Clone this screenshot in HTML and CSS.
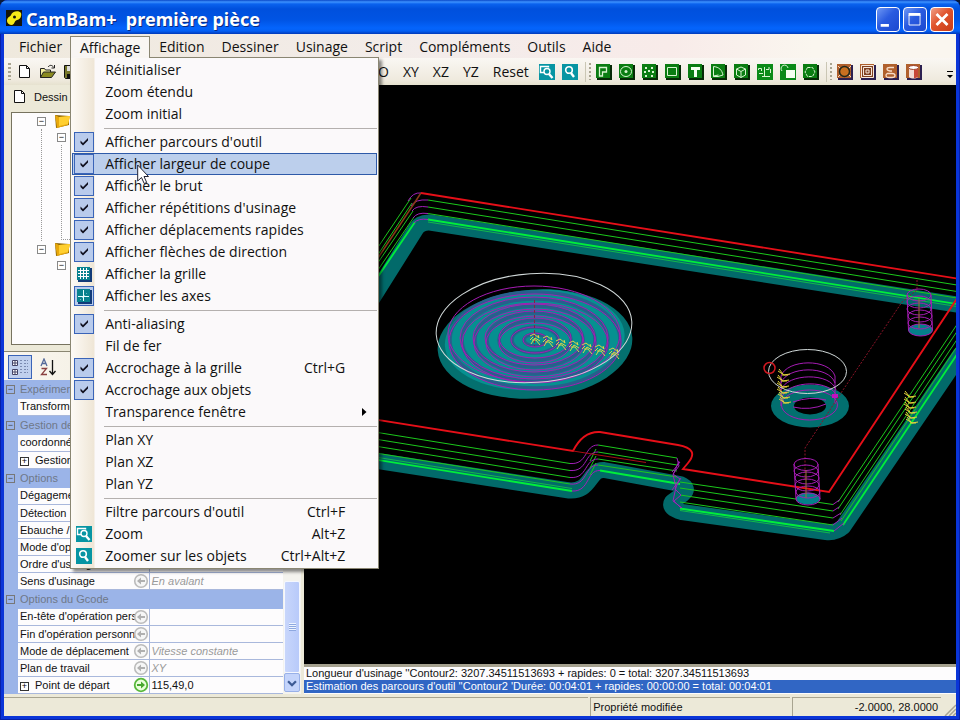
FILE: index.html
```html
<!DOCTYPE html>
<html lang="fr">
<head>
<meta charset="utf-8">
<title>CamBam+ première pièce</title>
<link rel="stylesheet" href="styles.css">
</head>
<body>
<svg class="defs" aria-hidden="true">
  <defs>
    <symbol id="check" viewBox="0 0 16 16"><path d="M4.500 6.500v2.500L7 11.500l5-5V4L7 9z" fill="#101020"/></symbol>
    <symbol id="page" viewBox="0 0 16 16"><path d="M2.500 1.500h7l3 3v9h-10z" fill="#fff" stroke="#111"/><path d="M9.500 1.500v3h3" fill="none" stroke="#111"/></symbol>
    <symbol id="zoomwin" viewBox="0 0 16 16"><path fill="#0795a3" d="M0 0h16v16H0z"/><path d="M5 8.500H1.500v-6h8v1" fill="none" stroke="#fff" stroke-width="1.400"/><circle cx="8" cy="7.500" r="3" fill="none" stroke="#fff" stroke-width="1.400"/><path d="M10 10l3.500 4" stroke="#fff" stroke-width="2.400"/></symbol>
    <symbol id="zoomobj" viewBox="0 0 16 16"><path fill="#0795a3" d="M0 0h16v16H0z"/><circle cx="7" cy="6" r="3.300" fill="none" stroke="#fff" stroke-width="1.600"/><path d="M9 9l3 4" stroke="#fff" stroke-width="2.400"/></symbol>
    <symbol id="tile" viewBox="0 0 16 16"><path fill="#062a06" d="M1 1h15v15H1z"/><path fill="#0a7d12" d="M0 0h14v14H0z"/></symbol>
    <symbol id="btile" viewBox="0 0 16 16"><path fill="#2c2050" d="M1 1h15v15H1z"/><path fill="#b0602c" d="M0 0h14v14H0z"/></symbol>
    <symbol id="back" viewBox="0 0 16 16"><circle cx="8" cy="8" r="6.300" fill="#f6f6f6" stroke="#bbb" stroke-width="1.600"/><path d="M4 8l4-3.500v2.500h4v2H8v2.500z" fill="#b0b0b0"/></symbol>
    <symbol id="fwd" viewBox="0 0 16 16"><circle cx="8" cy="8" r="6.300" fill="#eaffdc" stroke="#58b83c" stroke-width="1.800"/><path d="M12 8L8 4.500v2.500H4v2h4v2.500z" fill="#48a830"/></symbol>
    <symbol id="folder" viewBox="0 0 17 15"><path d="M1 1l14 1v9L2 14z" fill="#8a6408"/><path d="M1 1l4 2 11-1-2 9-11 3z" fill="#e8a80c"/><path d="M5 3l11-1-2 8-9 2z" fill="#ffcf30"/></symbol>
    <g id="up" fill="none" stroke="#d8d44a"><path d="M-5-3l4-2 5 4-1-3M-4 5l4-6 5 3M-3 1l4 0 4 5M-5 1l3-3"/></g>
    <g id="dn" fill="none" stroke="#e4d43a"><path d="M-6-3l6 4 6-1M-5-5l4 5M-2 1h6"/></g>
    <ellipse id="ring" rx="12" ry="6"/>
  </defs>
</svg>

<div class="window">
  <header class="titlebar">
    <svg class="logo" viewBox="0 0 16 16" aria-hidden="true"><path fill="#14140a" d="M0 0h16v16H0z"/><path d="M1 11c0-4 3-4 4-6 1-4 8-5 10-2 1 3-1 7-4 7-3 1-2 4-5 5-3 0-5-2-5-4z" fill="#f5ea18"/><circle cx="8.500" cy="7" r="1.500" fill="#14140a"/></svg>
    <h1>CamBam+ &nbsp;première pièce</h1>
    <div class="winbtns">
      <button class="wb" aria-label="Réduire"><svg viewBox="0 0 24 24"><path fill="#fff" d="M4 17h9v3H4z"/></svg></button>
      <button class="wb" aria-label="Agrandir"><svg viewBox="0 0 24 24"><path d="M5.500 7v11h12V7z" fill="none" stroke="#fff"/><path fill="#fff" d="M5 5h13v3H5z"/></svg></button>
      <button class="wb close" aria-label="Fermer"><svg viewBox="0 0 24 24"><path d="M6 6l12 12M18 6L6 18" stroke="#fff" stroke-width="3"/></svg></button>
    </div>
  </header>

  <nav class="menubar">
    <button>Fichier</button>
    <div class="open">
      <button aria-expanded="true">Affichage</button>
      <div class="popup" role="menu">
        <button role="menuitem"><i></i><span>Réinitialiser</span></button>
        <button role="menuitem"><i></i><span>Zoom étendu</span></button>
        <button role="menuitem"><i></i><span>Zoom initial</span></button>
        <hr>
        <button role="menuitemcheckbox" aria-checked="true"><i class="on"><svg><use href="#check"/></svg></i><span>Afficher parcours d'outil</span></button>
        <button class="hot" role="menuitemcheckbox" aria-checked="true"><i class="on"><svg><use href="#check"/></svg></i><span>Afficher largeur de coupe</span></button>
        <button role="menuitemcheckbox" aria-checked="true"><i class="on"><svg><use href="#check"/></svg></i><span>Afficher le brut</span></button>
        <button role="menuitemcheckbox" aria-checked="true"><i class="on"><svg><use href="#check"/></svg></i><span>Afficher répétitions d'usinage</span></button>
        <button role="menuitemcheckbox" aria-checked="true"><i class="on"><svg><use href="#check"/></svg></i><span>Afficher déplacements rapides</span></button>
        <button role="menuitemcheckbox" aria-checked="true"><i class="on"><svg><use href="#check"/></svg></i><span>Afficher flèches de direction</span></button>
        <button role="menuitemcheckbox" aria-checked="false"><i><svg viewBox="0 0 16 16"><path fill="#123a78" d="M2 2h14v14H2z"/><path fill="#08828e" d="M1 1h13v13H1z"/><path d="M4.500 2v11M7.500 2v11M10.500 2v11M2 4.500h11M2 7.500h11M2 10.500h11" stroke="#fff"/></svg></i><span>Afficher la grille</span></button>
        <button role="menuitemcheckbox" aria-checked="true"><i class="on"><svg viewBox="0 0 16 16"><path fill="#123a78" d="M2 2h14v14H2z"/><path fill="#08828e" d="M1 1h13v13H1z"/><path d="M7.500 2v11M2 8.500h11" stroke="#e8ffff"/><path d="M4 12l7-7" stroke="#9cd4dc" stroke-dasharray="1 2"/></svg></i><span>Afficher les axes</span></button>
        <hr>
        <button role="menuitemcheckbox" aria-checked="true"><i class="on"><svg><use href="#check"/></svg></i><span>Anti-aliasing</span></button>
        <button role="menuitemcheckbox" aria-checked="false"><i></i><span>Fil de fer</span></button>
        <button role="menuitemcheckbox" aria-checked="true"><i class="on"><svg><use href="#check"/></svg></i><span>Accrochage à la grille</span><kbd>Ctrl+G</kbd></button>
        <button role="menuitemcheckbox" aria-checked="true"><i class="on"><svg><use href="#check"/></svg></i><span>Accrochage aux objets</span></button>
        <button role="menuitem"><i></i><span>Transparence fenêtre</span><svg class="sub" viewBox="0 0 5 8"><path d="M0 0l4.500 4L0 8z"/></svg></button>
        <hr>
        <button role="menuitem"><i></i><span>Plan XY</span></button>
        <button role="menuitem"><i></i><span>Plan XZ</span></button>
        <button role="menuitem"><i></i><span>Plan YZ</span></button>
        <hr>
        <button role="menuitem"><i></i><span>Filtre parcours d'outil</span><kbd>Ctrl+F</kbd></button>
        <button role="menuitem"><i><svg><use href="#zoomwin"/></svg></i><span>Zoom</span><kbd>Alt+Z</kbd></button>
        <button role="menuitem"><i><svg><use href="#zoomobj"/></svg></i><span>Zoomer sur les objets</span><kbd>Ctrl+Alt+Z</kbd></button>
        <svg class="cursor" viewBox="0 0 12 21" aria-hidden="true"><path d="M.7 1v16l3.800-3.500 2.700 6 2.500-1-2.700-6h4.500z" fill="#fff" stroke="#223"/></svg>
      </div>
    </div>
    <button>Edition</button>
    <button>Dessiner</button>
    <button>Usinage</button>
    <button>Script</button>
    <button>Compléments</button>
    <button>Outils</button>
    <button>Aide</button>
  </nav>

  <div class="toolbar" role="toolbar">
    <div class="files">
      <span class="grip"></span>
      <button aria-label="Nouveau"><svg><use href="#page"/></svg></button>
      <button aria-label="Ouvrir"><svg viewBox="0 0 16 16"><path d="M.5 13.500v-9h4l1 1.500h5v2" fill="#f4f0a0" stroke="#222"/><path d="M.5 13.500l3-5.500h12l-4 5.500z" fill="#8a8a20" stroke="#222"/><path d="M8 3c2-2.500 4-2 6 .5M14.500 1v3h-3" fill="none" stroke="#222"/></svg></button>
      <button aria-label="Enregistrer"><svg viewBox="0 0 16 16"><path d="M1.500 1.500h13v13h-12l-1-1z" fill="#77772a" stroke="#111"/><path d="M4 2h8v5H4z" fill="#ddd"/><path d="M4 10h8v4H4z" fill="#111"/></svg></button>
    </div>
    <div class="views">
      <button>O</button><button>XY</button><button>XZ</button><button>YZ</button><button>Reset</button>
    </div>
    <div class="icons">
      <button aria-label="Zoom"><svg><use href="#zoomwin"/></svg></button>
      <button aria-label="Zoomer sur les objets"><svg><use href="#zoomobj"/></svg></button>
    </div>
    <span class="vsep"></span><span class="grip"></span>
    <div class="icons">
      <button aria-label="Polyligne"><svg viewBox="0 0 16 16"><use href="#tile"/><path d="M3.500 12V3.500h7V8h-4v4z" fill="none" stroke="#d8f4d0" stroke-width="1.300"/></svg></button>
      <button aria-label="Cercle"><svg viewBox="0 0 16 16"><use href="#tile"/><ellipse cx="7" cy="7.500" rx="5.500" ry="5" fill="none" stroke="#d8f4d0"/><circle cx="7" cy="7.500" r="1.500" fill="#d8f4d0"/></svg></button>
      <button aria-label="Points"><svg viewBox="0 0 16 16"><use href="#tile"/><path d="M3 3h2v2H3zM9 3h2v2H9zM2 7h2v2H2zM6 6h2v2H6zM10 7h2v2h-2zM3 11h2v2H3zM9 11h2v2H9z" fill="#d8f4d0"/></svg></button>
      <button aria-label="Rectangle"><svg viewBox="0 0 16 16"><use href="#tile"/><path d="M2.500 3.500h9v8h-9z" fill="none" stroke="#d8f4d0"/></svg></button>
      <button aria-label="Texte"><svg viewBox="0 0 16 16"><use href="#tile"/><path d="M3 3h9v3H9v7H6V6H3z" fill="#f4fff0"/></svg></button>
      <button aria-label="Arc"><svg viewBox="0 0 16 16"><use href="#tile"/><path d="M2.500 12.500V2.500C8 3 11 6 12 11l-5 1.500zM2.500 12l5-1" fill="none" stroke="#d8f4d0"/></svg></button>
      <button aria-label="Surface"><svg viewBox="0 0 16 16"><use href="#tile"/><path d="M2.500 5l4.500-2 4.500 2v6L7 13.500 2.500 11zM2.500 5L7 7.500 11.500 5M7 7.500v6" fill="none" stroke="#d8f4d0"/></svg></button>
      <button aria-label="Aligner"><svg viewBox="0 0 16 16"><path fill="#0a8a18" d="M0 0h16v16H0z"/><path d="M1.500 6V4.500h3V7M7.500 3v9M5 12.500h8M9 5.500h3V3M13.500 5v4M2 9.500h4" fill="none" stroke="#d8f4d0"/></svg></button>
      <button aria-label="Transformer"><svg viewBox="0 0 16 16"><path fill="#0a8a18" d="M0 0h16v16H0z"/><path d="M2 7a3.500 3.500 0 1 1 6-3" fill="none" stroke="#d8f4d0"/><path fill="#f4fff0" d="M6 6h9v8H6z"/></svg></button>
      <button aria-label="Contour"><svg viewBox="0 0 16 16"><use href="#tile"/><path d="M4.500 3.500h5L12 8l-2.500 4.500h-5L2 8z" fill="none" stroke="#d8f4d0" stroke-dasharray="3 1"/></svg></button>
    </div>
    <span class="vsep"></span><span class="grip"></span>
    <div class="icons">
      <button aria-label="Profil"><svg viewBox="0 0 16 16"><use href="#btile"/><circle cx="7.500" cy="7.500" r="5" fill="#c87020" stroke="#20281c" stroke-width="1.500"/><path d="M1 2l2 2M14 2l-2 2M1 13l2-2M14 13l-2-2" stroke="#f4d8c0"/></svg></button>
      <button aria-label="Poche"><svg viewBox="0 0 16 16"><use href="#btile"/><path d="M1.500 1.500h12v12h-12zM3.500 3.500h8v8h-8zM6 6h3v3H6z" fill="#804020" stroke="#f8e8dc"/></svg></button>
      <button aria-label="Gravure"><svg viewBox="0 0 16 16"><use href="#btile"/><path d="M11 3.500H7c-4 0-4 3 0 3.500h2M4 9.500h5c4 0 4 4 0 4H6c-3 0-4-2-2-4" fill="none" stroke="#f8dcc8" stroke-width="1.300"/></svg></button>
      <button aria-label="Perçage"><svg viewBox="0 0 16 16"><use href="#btile"/><path d="M3 4v9c2 2 7 2 9 0V4z" fill="#f4dcd4"/><path d="M8 4h4v9l-4 1.500z" fill="#c84838"/><ellipse cx="7.500" cy="3.500" rx="5" ry="2" fill="#fff" stroke="#a04028"/></svg></button>
    </div>
    <button class="more" aria-label="Plus"><svg viewBox="0 0 6 8"><path d="M0 0h6v1H0zM0 4h6L3 7z"/></svg></button>
  </div>

  <main class="body">
    <section class="side">
      <div class="tab"><svg><use href="#page"/></svg><span>Dessin</span></div>
      <ul class="tree">
        <li><div class="node"><button aria-label="Réduire Calques">−</button><svg><use href="#folder"/></svg></div>
          <ul class="long"><li><div class="node"><button aria-label="Réduire Défaut">−</button></div><ul class="leaf"></ul></li></ul></li>
        <li><div class="node"><button aria-label="Réduire Usinage">−</button><svg><use href="#folder"/></svg></div>
          <ul><li><div class="node"><button aria-label="Réduire Pièce">−</button></div></li></ul></li>
      </ul>
      <div class="proptools">
        <button class="pressed" aria-label="Par catégorie"><svg viewBox="0 0 18 18"><path d="M1.500 2.500h5v5h-5zM1.500 11.500h5v5h-5z" fill="#fff" stroke="#446"/><path d="M4 3v4M2 5h4M4 12v4M2 14h4" stroke="#446"/><path d="M9 2.500h3M13 2.500h4M9 5.500h3M13 5.500h4M9 8.500h3M13 8.500h4M9 11.500h3M13 11.500h4M9 14.500h3M13 14.500h4" stroke="#7a8ab0" stroke-dasharray="2 1"/></svg></button>
        <button aria-label="Alphabétique"><svg viewBox="0 0 18 18"><path d="M2 8l3-7 3 7M3 5.500h4" fill="none" stroke="#556a9a" stroke-width="1.300"/><path d="M2.500 10.500h5l-5 6h5.500" fill="none" stroke="#8a4040" stroke-width="1.300"/><path d="M13.500 2v14M10.500 13l3 3.500 3-3.500" fill="none" stroke="#111" stroke-width="1.300"/></svg></button>
      </div>
      <div class="propwrap">
        <table class="props">
          <colgroup><col class="c0"><col class="c1"><col></colgroup>
          <tbody>
          <tr class="cat"><td><button aria-label="Réduire">−</button></td><th colspan="2">Expérimental</th></tr>
          <tr><td></td><th>Transformer</th><td></td></tr>
          <tr class="cat"><td><button aria-label="Réduire">−</button></td><th colspan="2">Gestion des points</th></tr>
          <tr><td></td><th>coordonnées</th><td></td></tr>
          <tr><td></td><th><button aria-label="Développer">+</button>Gestion</th><td></td></tr>
          <tr class="cat"><td><button aria-label="Réduire">−</button></td><th colspan="2">Options</th></tr>
          <tr><td></td><th>Dégagement</th><td></td></tr>
          <tr><td></td><th>Détection</th><td></td></tr>
          <tr><td></td><th>Ebauche / Finition</th><td></td></tr>
          <tr><td></td><th>Mode d'optimisation</th><td></td></tr>
          <tr><td></td><th>Ordre d'usinage</th><td></td></tr>
          <tr><td></td><th>Sens d'usinage<svg><use href="#back"/></svg></th><td class="dim">En avalant</td></tr>
          <tr class="cat"><td><button aria-label="Réduire">−</button></td><th colspan="2">Options du Gcode</th></tr>
          <tr><td></td><th>En-tête d'opération pers<svg><use href="#back"/></svg></th><td></td></tr>
          <tr><td></td><th>Fin d'opération personn<svg><use href="#back"/></svg></th><td></td></tr>
          <tr><td></td><th>Mode de déplacement<svg><use href="#back"/></svg></th><td class="dim">Vitesse constante</td></tr>
          <tr><td></td><th>Plan de travail<svg><use href="#back"/></svg></th><td class="dim">XY</td></tr>
          <tr><td></td><th><button aria-label="Développer">+</button>Point de départ<svg><use href="#fwd"/></svg></th><td>115,49,0</td></tr>
          </tbody>
        </table>
        <div class="scroll">
          <div class="thumb"><i></i></div>
          <button aria-label="Défiler vers le bas"><svg viewBox="0 0 16 16"><path d="M3.500 6L8 10.500 12.500 6" fill="none" stroke="#3c5a94" stroke-width="2.600"/></svg></button>
        </div>
      </div>
    </section>

    <section class="work">
      <svg class="scene" viewBox="304 85 652 579" preserveAspectRatio="xMinYMin slice" role="img" aria-label="Vue 3D de la pièce">
        <path fill="#000" d="M304 85h2000v2000H304z"/>
        <g fill="none" stroke="#026a6a" stroke-width="16" stroke-linejoin="round" stroke-linecap="round">
          <path d="M330 366L416 229Q420 222 430 222.500L960 305"/>
          <path d="M300 449L566 490C592 494 588 469 604 470L680 484Q690 488 683 494L672 502Q668 508 682 512L826 532Q836 533 843 527L960 355"/>
        </g>
        <g fill="none" stroke="#1cc81c">
          <path d="M350 289L411 198M428 200L960 285.500M350 297L412 203M428 207L960 292M350 304L413 211M428 213.500L960 298.500M350 311L414 217"/>
          <path d="M300 420L570 463.500M300 427L570 470.500M300 434L570 477.500M300 441L570 484"/>
          <path d="M598 445L677 458M598 452L677 465M598 459L677 471M598 465L677 477"/>
          <path d="M680 482L833 504.500M680 488L833 511M680 495L833 518M680 502L833 525"/>
          <path d="M838 502L960 320M838 509L960 327M840 515L960 335M841 521L960 342"/>
          <path d="M590 461L596 449M590 468L596 456M590 475L596 463" />
        </g>
        <g fill="none" stroke="#00ee3a" stroke-width="1.800">
          <path d="M350 318L415 222M428 219.500L960 304.500M300 447.500L572 491M600 470.500L680 484M680 508.500L834 531M843 525L960 350"/>
        </g>
        <path d="M428 222L960 307M300 445L572 488.500M680 510.500L830 533" fill="none" stroke="#12b84a"/>
        <g fill="none" stroke="#a020b8">
          <path d="M408 201Q413 192 421 193M411 206Q415 199 428 200M412 211Q416 205 428 207M413 218Q417 212 428 213.500M414 223Q418 218 428 219.500"/>
          <path d="M570 463.500C588 465 584 445 598 445M570 470.500C588 472 584 452 598 452M570 477.500C588 479 584 459 598 459M570 484C588 486 584 465 598 465M572 491C590 492 586 470 600 470.500"/>
          <path d="M677 458l2 8-6 8 7 5-5 10 6 6-7 6 7 7M679 461l-6 14 3 12-3 14 9 7M672 472l8-10M672 490l9-12"/>
          <path d="M833 504.500l7-5M833 511l6-4M833 518l8-5M833 525l9-7M834 531l10-8"/>
        </g>
        <path d="M421 193L370 270" fill="none" stroke="#8a3a18" stroke-width="1.500"/>
        <path d="M421 193L960 279M300 407.500L573 451Q583 431 600 432L678 445Q700 449 688 463L683 469 829 492 960 294" fill="none" stroke="#e60f18" stroke-width="1.900"/>
        <path d="M573 451L646 462.500" stroke="#a80c14"/>

        <g transform="rotate(-4 535 344)">
          <ellipse cx="535" cy="344" rx="97.500" ry="54.500" fill="#04706f"/>
          <ellipse cx="535" cy="340" rx="90" ry="50" fill="#069090"/>
        </g>
        <g fill="none" stroke="#285f8c" stroke-width="3.500">
          <ellipse cx="535" cy="340" rx="85" ry="48"/><ellipse cx="535" cy="340" rx="73" ry="41"/><ellipse cx="535" cy="340" rx="60" ry="34"/><ellipse cx="535" cy="340" rx="48" ry="27"/><ellipse cx="535" cy="340" rx="36" ry="20"/><ellipse cx="535" cy="340" rx="23" ry="13"/><ellipse cx="535" cy="340" rx="11" ry="6"/>
        </g>
        <g fill="none" stroke="#a61cb4" stroke-width="1">
          <ellipse cx="534" cy="334" rx="86" ry="48"/><ellipse cx="535" cy="342" rx="86" ry="48"/>
          <ellipse cx="534" cy="338" rx="74" ry="41"/><ellipse cx="535" cy="343" rx="73" ry="40"/>
          <ellipse cx="534" cy="338" rx="61" ry="34"/><ellipse cx="535" cy="343" rx="61" ry="34"/>
          <ellipse cx="534" cy="338" rx="49" ry="27"/><ellipse cx="535" cy="343" rx="49" ry="27"/>
          <ellipse cx="535" cy="338" rx="36" ry="20"/><ellipse cx="535" cy="343" rx="36" ry="20"/>
          <ellipse cx="535" cy="340" rx="24" ry="13"/><ellipse cx="535" cy="340" rx="12" ry="7"/>
        </g>
        <ellipse cx="534" cy="328" rx="98" ry="54.500" fill="none" stroke="#d0d8d8" transform="rotate(-4 534 328)"/>
        <path d="M534.500 300v46" stroke="#8c2040" stroke-dasharray="3 2"/>
        <g><use href="#up" x="535" y="339"/><use href="#up" x="548" y="341"/><use href="#up" x="561" y="344"/><use href="#up" x="574" y="346"/><use href="#up" x="587" y="348"/><use href="#up" x="600" y="350"/><use href="#up" x="614" y="353"/></g>

        <path fill="#026f6f" fill-rule="evenodd" d="M771 406a39 21.500 0 1 0 78 0a39 21.500 0 1 0-78 0M794 406a16 8.500 0 1 0 32 0a16 8.500 0 1 0-32 0"/>
        <g fill="none" stroke="#a61cb4">
          <path d="M781 376c6-17 48-18 54 0v28M781 383c6-17 48-18 54 0M781 390c6-17 50-18 55 0M782 397c6-17 50-18 55 0M781 376v30"/>
          <ellipse cx="809.500" cy="405" rx="28" ry="15"/><path d="M793 407q17 4 33-3M793 402q17-6 33-2"/>
        </g>
        <path fill="#c010c0" d="M832 394h6v4h-6z"/>
        <ellipse cx="807.500" cy="371.500" rx="39" ry="22" fill="none" stroke="#d0d8d8"/>
        <circle cx="769.500" cy="368" r="5.500" fill="none" stroke="#d01820" stroke-width="1.500"/>
        <path d="M917 280v10L902 302 843 390 805 448v32" fill="none" stroke="#8c1428" stroke-dasharray="2 1.500"/>
        <g><use href="#dn" x="784" y="374"/><use href="#dn" x="783" y="380"/><use href="#dn" x="783" y="386"/><use href="#dn" x="783" y="392"/><use href="#dn" x="784" y="397"/><use href="#dn" x="785" y="402"/></g>
        <g fill="#04808a"><use href="#ring" x="920.500" y="330"/><use href="#ring" x="808" y="498.500"/></g>
        <g fill="none" stroke="#a61cb4">
          <use href="#ring" x="919" y="295"/><use href="#ring" x="919" y="302"/><use href="#ring" x="919" y="309"/><use href="#ring" x="920" y="316"/><use href="#ring" x="920" y="323"/><use href="#ring" x="920.500" y="330"/><path d="M907 295l1.500 35M931 295l1.500 35"/>
          <use href="#ring" x="806" y="464.500"/><use href="#ring" x="806" y="471"/><use href="#ring" x="807" y="478"/><use href="#ring" x="807" y="485"/><use href="#ring" x="808" y="492"/><use href="#ring" x="808" y="499"/><path d="M794 464l2 35M818 464l2 35"/>
        </g>
        <path d="M806 470v28M919 298v30" stroke="#9a7030"/>
        <g><use href="#dn" x="910" y="396"/><use href="#dn" x="910" y="402"/><use href="#dn" x="910" y="407"/><use href="#dn" x="911" y="412"/><use href="#dn" x="911" y="417"/><use href="#dn" x="912" y="422"/></g>
      </svg>
      <div class="log">
        <p>Longueur d'usinage ''Contour2: 3207.34511513693 + rapides: 0 = total: 3207.34511513693</p>
        <p class="sel">Estimation des parcours d'outil ''Contour2 'Durée: 00:04:01 + rapides: 00:00:00 = total: 00:04:01</p>
      </div>
    </section>
  </main>

  <footer class="status">
    <span class="cell main"></span>
    <span class="cell msg">Propriété modifiée</span>
    <span class="cell pos">-2.0000, 28.0000</span>
    <svg class="size" viewBox="0 0 12 12" aria-hidden="true"><path d="M1 12L12 1M5 12l7-7M9 12l3-3" stroke="#a8a492" stroke-width="1.500"/></svg>
  </footer>
</div>
</body>
</html>
```
FILE: styles.css
```css
* { box-sizing: border-box; }
body { margin: 0; font: 11px/13px "Liberation Sans", Arial, sans-serif; color: #111; background: #0a1a3a; }
button { font: inherit; color: inherit; background: none; border: 0; padding: 0; margin: 0; display: block; }
svg { display: block; width: 16px; height: 16px; flex: none; }
ul { list-style: none; margin: 0; padding: 0; }
p, h1 { margin: 0; }
.defs { position: absolute; width: 0; height: 0; }

.window { display: flex; flex-direction: column; height: 100vh; min-height: 600px; padding: 0 4px 4px; overflow: hidden;
  background: #0a35d8; box-shadow: inset 1px 0 #0620a8, inset -1px -1px #0620a8; border-radius: 8px 8px 0 0; }

.titlebar { display: flex; align-items: center; flex: none; height: 34px; margin: 0 -4px; padding: 4px 6px 0; color: #fff;
  background: linear-gradient(#0a48c8 0, #3d92ff 2px, #0a62ee 4px, #0050dd 9px, #0054e4 20px, #0464fc 28px, #0460f4 31px, #0038b8 34px); }
.logo { margin-bottom: 2px; }
.titlebar h1 { flex: 1; margin-left: 4px; font: bold 18px/24px "Noto Sans", sans-serif; text-shadow: 1px 1px #0a2a80; }
.winbtns { display: flex; gap: 3px; }
.wb { width: 24px; height: 25px; border: 1px solid #fff; border-radius: 4px; background: linear-gradient(135deg, #6f98f4, #2a5be0 45%, #1a48d0); }
.wb svg { width: 22px; height: 23px; }
.close { background: linear-gradient(135deg, #f0a088, #e0532c 45%, #c83c18); }

.menubar, .toolbar { font: 14px/22px "Open Sans", "Noto Sans", sans-serif; }
.menubar { position: relative; z-index: 2; display: flex; align-items: flex-end; flex: none; height: 24px; padding-left: 6px;
  background: linear-gradient(90deg, #efe9dd, #f3ecea 45%, #f8ebe9 70%, #faf6ef 85%); }
.menubar > button { padding: 0 8px 0 9px; height: 22px; line-height: 22px; }
.open { position: relative; }
.open > button { height: 22px; width: 80px; border: 1px solid #8a8672; border-bottom: 0; background: #f9f6f3; line-height: 21px; }
.popup { position: absolute; left: 0; top: 21px; width: 309px; padding: 1px; border: 1px solid #8a8672; color: #111;
  background: linear-gradient(90deg, #fdfaf6, #efe6d6 23px, #fbf9fa 24px); box-shadow: 3px 3px 3px rgba(0, 0, 0, .45); }
.popup::before { content: ""; position: absolute; left: 0; top: -1px; width: 78px; height: 1px; background: #f9f6f3; }
.popup button { display: flex; align-items: center; width: 100%; height: 22px; padding-right: 31px; border: 1px solid transparent; }
.popup button > span { flex: 1; margin-left: 11px; text-align: left; white-space: nowrap; }
.popup i { display: grid; place-items: center; width: 20px; height: 20px; margin-left: 1px; }
.popup i.on { border: 1px solid #3a64b8; background: #b9cbec; }
.popup .hot { border-color: #2e5aa8; background: #bccfec; }
.popup kbd { font: inherit; }
.popup .sub { width: 5px; height: 8px; margin-right: -22px; }
.popup hr { height: 1px; margin: 3px 0 2px 32px; border: 0; background: #b4b0ae; }
.cursor { position: absolute; left: 66px; top: 106px; width: 12px; height: 21px; }

.toolbar { display: flex; align-items: center; flex: none; height: 27px; background: linear-gradient(#faf7f3, #efeade 80%, #e6e2cf); }
.grip { width: 3px; height: 17px; margin: 0 6px 0 4px; background: repeating-linear-gradient(#a8a490 0 2px, transparent 2px 4px); }
.files { display: flex; align-items: center; gap: 7px; flex: none; width: 374px; }
.files .grip { margin-right: -1px; }
.views { display: flex; gap: 14px; }
.icons { display: flex; gap: 7px; }
.views + .icons { margin-left: 10px; }
.icons button { width: 16px; }
.vsep { width: 1px; height: 20px; margin-left: 7px; background: #cac6b4; }
.icons + .vsep + .grip { width: 2px; margin: 0 5px 0 3px; }
.more { margin: 6px 3px 0 auto; }
.more svg { width: 6px; height: 8px; }

.body { display: flex; flex: 1; min-height: 0; background: #ece9d8; }
.side { display: flex; flex-direction: column; flex: none; width: 297px; margin-right: 3px; }
.tab { display: flex; align-items: center; gap: 6px; height: 24px; margin-bottom: 3px; padding: 0 8px; }
.tree { flex: 1; min-height: 0; overflow: hidden; margin: 0 0 6px 7px; padding-left: 25px; border: 1px solid #77735f; background: #fdfcfd; }
.node { display: flex; align-items: center; height: 16px; gap: 8px; }
.node svg { width: 17px; height: 15px; }
.tree button, .props button { width: 9px; height: 9px; border: 1px solid #888; background: #fff; font-size: 9px; line-height: 7px; text-align: center; color: #000; }
.tree ul { margin-left: 4px; padding-left: 16px; }
.tree .long { border-left: 1px dotted #999; padding-left: 15px; height: 112px; }
.tree .leaf { height: 95px; border-left: 1px dotted #999; border-bottom: 1px dotted #999; }

.proptools { display: flex; align-items: center; gap: 4px; height: 29px; padding: 2px 4px 0; border-top: 1px solid #8a8672; background: linear-gradient(90deg, #faf6ef, #e8e4d0); }
.proptools button { padding: 2px; border: 1px solid transparent; }
.proptools .pressed { border-color: #3a64b8; background: #c0d0ee; }
.proptools svg { width: 18px; height: 18px; }

.propwrap { display: flex; flex: none; }
.props { flex: 1; table-layout: fixed; width: 0; border-collapse: collapse; background: #fdfcfd; }
.c0 { width: 14px; } .c1 { width: 131px; }
.props tr { height: 17px; }
.props td, .props th { position: relative; padding: 0 0 0 2px; height: 17px; font-weight: normal; text-align: left; white-space: nowrap; overflow: hidden; line-height: 15px; border-bottom: 1px solid #a9b8dc; }
.props th { border-right: 1px solid #a9b8dc; }
.props td:first-child { background: #9bb4e8; border: 0; }
.props .cat > *, .props .cat td:first-child { height: 19px; background: #9bb4e8; border: 0; color: #6f7888; line-height: 17px; }
.props .cat button { background: #9bb4e8; border-color: #777; color: #444; }
.props th button { display: inline-block; margin: 0 6px 0 0; border-color: #333; }
.props th svg { position: absolute; right: 0; top: 0; }
.props .dim { font-style: italic; color: #9a9a9a; }

.scroll { display: flex; flex-direction: column; justify-content: flex-end; width: 18px; background: #f4f3ee; }
.thumb { display: grid; place-items: center; height: 92px; margin: 0 1px; border: 1px solid #f4f7ff; border-radius: 2px; background: linear-gradient(90deg, #c8d6fb, #b8cafa); }
.thumb i { width: 7px; height: 8px; background: repeating-linear-gradient(#eef4ff 0 1px, #8ea8e0 1px 2px); }
.scroll button { height: 19px; margin: 0 1px 2px; border: 1px solid #98b0e8; border-radius: 2px; background: #c4d4fb; }
.scroll button svg { width: 14px; margin: auto; }

.work { display: flex; flex-direction: column; flex: 1; min-width: 0; }
.scene { flex: 1; width: 100%; height: auto; min-height: 0; }
.log { border-top: 3px solid #a5a18f; background: #fdfcfd; padding-bottom: 1px; }
.log p { padding: 0 2px; white-space: nowrap; overflow: hidden; }
.log .sel { background: #3166c4; color: #fff; }

.status { display: flex; flex: none; height: 22px; padding-top: 3px; background: #ece9d8; }
.cell { border-top: 1px solid #a8a490; border-left: 1px solid #a8a490; padding: 1px 2px; line-height: 16px; }
.main { flex: 591; border-left: 0; } .msg { flex: 198; margin: 0 2px; }
.pos { flex: 146; text-align: right; padding-right: 3px; }
.size { width: 12px; height: 12px; margin: 7px 0 0 3px; }
```
